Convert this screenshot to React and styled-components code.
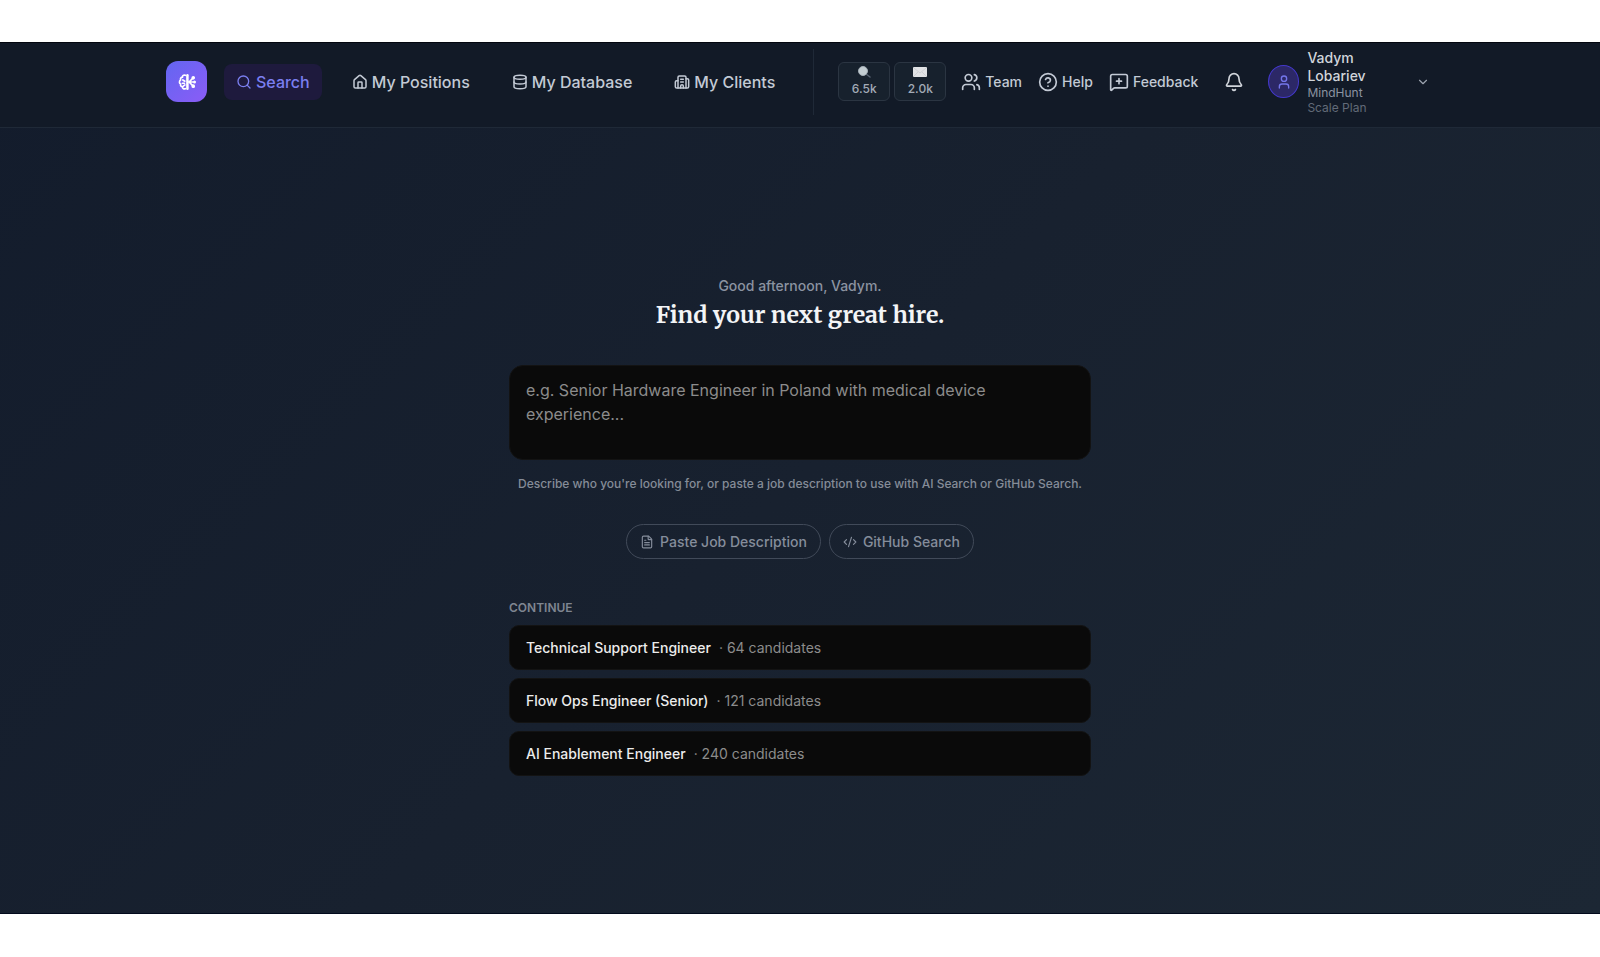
import React from 'react';
import styled, { createGlobalStyle } from 'styled-components';
import {
  Bell,
  Building2,
  ChevronDown,
  CircleQuestionMark,
  CodeXml,
  Database,
  FileText,
  House,
  MessageSquarePlus,
  Search,
  User,
  Users,
} from 'lucide-react';

const navItems = [
  { label: 'Search', icon: Search, active: true },
  { label: 'My Positions', icon: House },
  { label: 'My Database', icon: Database },
  { label: 'My Clients', icon: Building2 },
];

const utilityItems = [
  { label: 'Team', icon: Users },
  { label: 'Help', icon: CircleQuestionMark },
  { label: 'Feedback', icon: MessageSquarePlus },
];

const positions = [
  { title: 'Technical Support Engineer', candidates: 64 },
  { title: 'Flow Ops Engineer (Senior)', candidates: 121 },
  { title: 'AI Enablement Engineer', candidates: 240 },
];

const LogoMark = () => (
  <svg width="20" height="20" viewBox="0 0 24 24" fill="none" stroke="#fff" strokeWidth="2" strokeLinecap="round">
    <path d="M10 4C8 3 6.500 4.500 6.500 6.200c-2 .5-2.800 1.800-2.200 3.300C2.500 11 2.500 13.500 4.300 14.500 3.800 16.300 5 17.600 6.500 17.700c0 1.800 1.500 3.300 3.500 2.300" />
    <path d="M7 9.500l2.500 1.500M6.500 13.500H9M7.500 17l2-1.500" />
    <path d="M12.500 4v16" strokeWidth="3" />
    <path d="M13 12h6M14.500 12l4-4M14.500 12l4 4" strokeWidth="2" />
    <circle cx="19.500" cy="7" r="1.200" fill="#fff" />
    <circle cx="21" cy="12" r="0.800" fill="#fff" />
    <circle cx="19.500" cy="17" r="1.200" fill="#fff" />
  </svg>
);

const LensGlyph = () => (
  <svg width="14" height="12" viewBox="0 0 14 12">
    <path d="M9 8l4 3" stroke="#566170" strokeWidth="1.500" strokeLinecap="round" />
    <circle cx="6" cy="5" r="4.500" fill="#c3cdd2" stroke="#a3adb5" />
  </svg>
);

const EnvelopeGlyph = () => (
  <svg width="14" height="12" viewBox="0 0 14 12">
    <rect y="1" width="14" height="10" rx="1" fill="#e1e3e5" />
    <path d="M1 2l6 5 6-5M1 10l4-4M13 10L9 6" fill="none" stroke="#c9cccf" strokeWidth="0.800" />
  </svg>
);

const App = () => (
  <>
    <GlobalStyle />
    <Page>
      <Header>
        <HeaderInner>
          <Logo href="#" aria-label="MindHunt">
            <LogoMark />
          </Logo>
          <Nav>
            {navItems.map(({ label, icon: Icon, active }) => (
              <NavLink href="#" key={label} $active={active}>
                <Icon size={16} strokeWidth={active ? 2 : 2.25} />
                {label}
              </NavLink>
            ))}
          </Nav>
          <Divider />
          <Credits>
            <Credit type="button" aria-label="Search credits">
              <LensGlyph />
              6.5k
            </Credit>
            <Credit type="button" aria-label="Contact credits">
              <EnvelopeGlyph />
              2.0k
            </Credit>
          </Credits>
          <Utilities>
            {utilityItems.map(({ label, icon: Icon }) => (
              <UtilityButton type="button" key={label}>
                <Icon size={20} />
                {label}
              </UtilityButton>
            ))}
          </Utilities>
          <BellButton type="button" aria-label="Notifications">
            <Bell size={20} />
          </BellButton>
          <Account type="button">
            <Avatar>
              <User size={16} />
            </Avatar>
            <AccountText>
              <AccountName>Vadym Lobariev</AccountName>
              <AccountOrg>MindHunt</AccountOrg>
              <AccountPlan>Scale Plan</AccountPlan>
            </AccountText>
            <ChevronDown size={14} />
          </Account>
        </HeaderInner>
      </Header>

      <Main>
        <Greeting>Good afternoon, Vadym.</Greeting>
        <Title>Find your next great hire.</Title>
        <Prompt
          aria-label="Describe who you're looking for"
          placeholder="e.g. Senior Hardware Engineer in Poland with medical device experience..."
        />
        <Hint>Describe who you're looking for, or paste a job description to use with AI Search or GitHub Search.</Hint>
        <Actions>
          <Pill type="button">
            <FileText size={14} />
            Paste Job Description
          </Pill>
          <Pill type="button">
            <CodeXml size={14} />
            GitHub Search
          </Pill>
        </Actions>
        <SectionLabel>Continue</SectionLabel>
        <PositionList>
          {positions.map(({ title, candidates }) => (
            <li key={title}>
              <PositionButton type="button">
                <PositionTitle>{title}</PositionTitle>
                <span>· {candidates} candidates</span>
              </PositionButton>
            </li>
          ))}
        </PositionList>
      </Main>
    </Page>
  </>
);

export default App;

const GlobalStyle = createGlobalStyle`
  * {
    box-sizing: border-box;
  }
  body {
    margin: 0;
    background: #fff;
    font-family: Inter, 'Liberation Sans', sans-serif;
  }
  button,
  textarea {
    font-family: inherit;
  }
  button {
    cursor: pointer;
  }
  svg {
    flex-shrink: 0;
  }
`;

const Page = styled.div`
  margin: 42px 0;
  min-height: calc(100vh - 85px);
  background: linear-gradient(135deg, #131c2c 0%, #18212f 50%, #1c2734 100%);
  border-top: 1px solid #03070f;
  border-bottom: 1px solid #020a1c;
`;

const Header = styled.header`
  background: #121a27;
  border-bottom: 1px solid #1f2937;
`;

const HeaderInner = styled.div`
  display: flex;
  align-items: center;
  max-width: 1268px;
  height: 84px;
  margin: 0 auto;
  padding-bottom: 7px;
`;

const Logo = styled.a`
  display: flex;
  align-items: center;
  justify-content: center;
  flex-shrink: 0;
  width: 41px;
  height: 41px;
  margin-right: 17px;
  border-radius: 12px;
  background: linear-gradient(135deg, #6366f1, #8b5cf6);
`;

const Nav = styled.nav`
  display: flex;
  gap: 18px;
`;

const NavLink = styled.a`
  display: flex;
  align-items: center;
  gap: 4px;
  height: 36px;
  padding: 0 12px;
  border-radius: 8px;
  background: ${({ $active }) => ($active ? '#1e1a3d' : 'transparent')};
  color: ${({ $active }) => ($active ? '#7b7ff0' : '#c3cad5')};
  font-size: 16px;
  font-weight: 500;
  text-decoration: none;
  white-space: nowrap;
`;

const Divider = styled.div`
  width: 1px;
  height: 66px;
  margin: 0 24px 0 26px;
  background: #1f2937;
`;

const Credits = styled.div`
  display: flex;
  gap: 4px;
`;

const Credit = styled.button`
  display: flex;
  flex-direction: column;
  align-items: center;
  gap: 3px;
  width: 52px;
  height: 39px;
  padding: 3px 0;
  border: 1px solid #2b3542;
  border-radius: 6px;
  background: #17212d;
  color: #a3abb7;
  font-size: 12px;
  font-weight: 500;
  line-height: 16px;
`;

const Utilities = styled.div`
  display: flex;
  gap: 16px;
  margin-left: 15px;
`;

const UtilityButton = styled.button`
  display: flex;
  align-items: center;
  gap: 4px;
  padding: 0;
  border: 0;
  background: none;
  color: #c3cad5;
  font-size: 14px;
  font-weight: 500;
`;

const BellButton = styled.button`
  display: flex;
  margin: 0 24px 0 26px;
  padding: 0;
  border: 0;
  background: none;
  color: #d1d5db;
`;

const Account = styled.button`
  display: flex;
  flex: 1;
  align-items: center;
  gap: 8px;
  padding: 0 4px 0 0;
  border: 0;
  background: none;
  color: #9ca3af;
  text-align: left;
`;

const Avatar = styled.span`
  display: flex;
  align-items: center;
  justify-content: center;
  width: 31px;
  height: 33px;
  border: 1px solid #4338ca;
  border-radius: 50%;
  background: #2c2867;
  color: #7375ea;
`;

const AccountText = styled.span`
  display: flex;
  flex-direction: column;
  width: 64px;
  margin-right: auto;
  white-space: nowrap;
`;

const AccountName = styled.span`
  color: #d1d5db;
  font-size: 14px;
  font-weight: 500;
  line-height: 18px;
  white-space: normal;
`;

const AccountOrg = styled.span`
  color: #8b93a1;
  font-size: 12px;
  line-height: 15px;
`;

const AccountPlan = styled(AccountOrg)`
  color: #626a78;
`;

const Main = styled.main`
  display: flex;
  flex-direction: column;
  align-items: center;
  max-width: 582px;
  margin: 0 auto;
  padding: 148px 0 32px;
`;

const Greeting = styled.p`
  margin: 0;
  color: #8b93a1;
  font-size: 14px;
  font-weight: 500;
  line-height: 20px;
`;

const Title = styled.h1`
  margin: 3px 0 34px;
  color: #f3f4f6;
  font-family: Merriweather, 'DejaVu Serif Condensed', 'DejaVu Serif', serif;
  font-size: 23px;
  font-weight: 700;
  line-height: 32px;
  white-space: nowrap;
`;

const Prompt = styled.textarea`
  display: block;
  width: 100%;
  height: 95px;
  padding: 12px 16px;
  border: 1px solid #131313;
  border-radius: 14px;
  outline: 0;
  background: #0a0a0a;
  color: #e5e7eb;
  font-size: 16px;
  line-height: 24px;
  resize: none;

  &::placeholder {
    color: #8c8c8c;
  }
`;

const Hint = styled.p`
  margin: 16px 0 32px;
  color: #858c98;
  font-size: 12px;
  font-weight: 500;
  line-height: 16px;
`;

const Actions = styled.div`
  display: flex;
  gap: 8px;
`;

const Pill = styled.button`
  display: flex;
  align-items: center;
  gap: 6px;
  height: 35px;
  padding: 0 13px;
  border: 1px solid #414a59;
  border-radius: 18px;
  background: none;
  color: #858d9b;
  font-size: 14px;
  font-weight: 500;
  white-space: nowrap;
`;

const SectionLabel = styled.h2`
  align-self: flex-start;
  margin: 40px 0 8px;
  color: #7f8691;
  font-size: 12px;
  font-weight: 600;
  line-height: 18px;
  text-transform: uppercase;
`;

const PositionList = styled.ul`
  display: flex;
  flex-direction: column;
  gap: 8px;
  width: 100%;
  margin: 0;
  padding: 0;
  list-style: none;
`;

const PositionButton = styled.button`
  display: flex;
  align-items: center;
  gap: 8px;
  width: 100%;
  height: 45px;
  padding: 0 16px;
  border: 1px solid #131313;
  border-radius: 10px;
  background: #0a0a0a;
  color: #8c8c8c;
  font-size: 14px;
`;

const PositionTitle = styled.span`
  color: #ececec;
  font-weight: 500;
`;
